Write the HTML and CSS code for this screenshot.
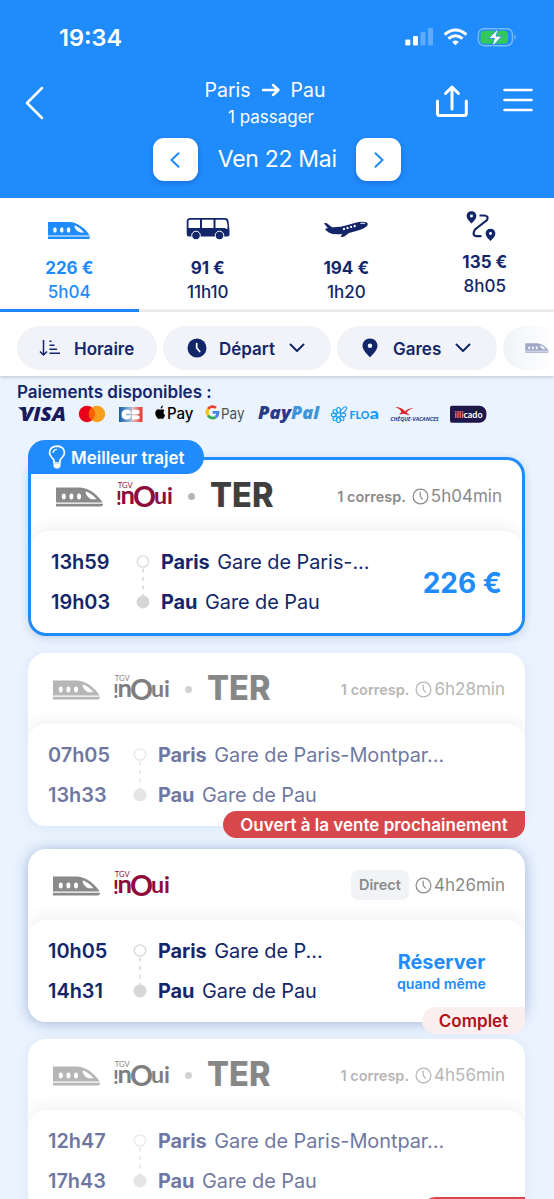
FILE: index.html
```
<!DOCTYPE html>
<html lang="fr">
<head>
<meta charset="utf-8">
<title>Paris - Pau</title>
<link rel="stylesheet" href="styles.css">
</head>
<body>
<svg class="defs" width="0" height="0">
  <symbol id="train" viewBox="0 0 47 20">
    <path fill="currentColor" fill-rule="evenodd" d="M0 .5h24C33 .5 43 9 46.6 15.500H0zM7.800 6.500q-2 0-2 3t2 3 2-3-2-3zm7.600 0q-2 0-2 3t2 3 2-3-2-3zm7.600 0q-2 0-2 3t2 3 2-3-2-3zM30.500 4.500q-1.800.8 0 3.500 2.500 4 5.500 4.300h4.500Q36.500 7 30.500 4.500z"/>
    <path fill="currentColor" d="M0 16.800h47q.3 2.700-2.500 2.700H0z"/>
  </symbol>
  <symbol id="clock" viewBox="0 0 17 17">
    <circle cx="8.500" cy="8.500" r="7.400" fill="none" stroke="currentColor" stroke-width="1.200"/>
    <path d="M8.200 4v4.600l2.300 2.600" fill="none" stroke="currentColor" stroke-width="1.200" stroke-linecap="round"/>
  </symbol>
  <symbol id="down" viewBox="0 0 16 10">
    <path d="M1.500 1.500L8 8l6.500-6.500" fill="none" stroke="currentColor" stroke-width="2" stroke-linecap="round" stroke-linejoin="round"/>
  </symbol>
  <symbol id="pin" viewBox="0 0 16 20">
    <path fill="currentColor" fill-rule="evenodd" d="M8 .5C3.700.5.5 3.700.5 7.800.5 12 4.500 16 8 19.200c3.500-3.200 7.500-7.200 7.500-11.400C15.500 3.700 12.300.5 8 .5zM8 5.500a2.300 2.300 0 1 1 0 4.600 2.300 2.300 0 0 1 0-4.600z"/>
  </symbol>
  <symbol id="inoui" viewBox="0 0 56 30">
    <g fill="currentColor" font-family="Lato, sans-serif">
      <text x=".8" y="7.300" font-size="8.200" textLength="15" lengthAdjust="spacingAndGlyphs">TGV</text>
      <g font-weight="700">
        <text x="-.8" y="23.700" font-size="18.500" font-weight="900">!</text>
        <text x="3.600" y="23" font-size="24" textLength="14.500" lengthAdjust="spacingAndGlyphs">n</text>
        <text x="37" y="23" font-size="23" textLength="19" lengthAdjust="spacingAndGlyphs">ui</text>
      </g>
      <text x="16" y="26.300" font-size="29" font-weight="700" textLength="23" lengthAdjust="spacingAndGlyphs">O</text>
    </g>
  </symbol>
  <symbol id="ter" viewBox="0 0 64 30">
    <text x="0" y="27.200" fill="currentColor" font-family="Inter, sans-serif" font-weight="800" font-size="34" textLength="63.500" lengthAdjust="spacingAndGlyphs">TER</text>
  </symbol>
  <symbol id="leg" viewBox="0 0 14 56">
    <circle cx="7" cy="7.500" r="5.700" fill="#fff" stroke="#dadada" stroke-width="1.300"/>
    <path d="M7 14.500V42" stroke="#d6d6d6" stroke-width="1.500" stroke-dasharray="4 4.500"/>
    <circle cx="7" cy="48" r="6.500" fill="#d6d6d6"/>
  </symbol>
</svg>

<header class="top">
  <div class="status">
    <span class="time">19:34</span>
    <svg width="112" height="20" viewBox="0 0 112 20">
      <g fill="#fff">
        <rect x=".3" y="11.500" width="5" height="6" rx="1.300"/><rect x="8" y="8" width="5" height="9.500" rx="1.300"/>
        <g opacity=".28"><rect x="15.500" y="4" width="5" height="13.500" rx="1.300"/><rect x="23" y="0" width="5" height="17.500" rx="1.300"/></g>
        <path d="M50.500 17.300l-3.400-3.300q3.400-2.900 6.800 0z"/>
      </g>
      <g fill="none" stroke="#fff" stroke-width="2.900"><path d="M39.600 6.600q10.900-9.400 21.800 0"/><path d="M43.400 10.700q7.100-6 14.200 0"/></g>
      <rect x="73.400" y=".7" width="34" height="17" rx="5.500" fill="none" stroke="#fff" stroke-opacity=".4" stroke-width="1.400"/>
      <rect x="75.500" y="2.800" width="27.500" height="13" rx="3.500" fill="#34c759"/>
      <path d="M109.500 6.500q2.600 2.600 0 5.200z" fill="#fff" opacity=".5"/>
      <path d="M93.500.2L83.800 10.500h5.700l-2.600 8.300L97 8.200h-6z" fill="#fff" stroke="#208bfb" stroke-width=".8"/>
    </svg>
  </div>
  <div class="nav">
    <svg class="back" width="20" height="34" viewBox="0 0 20 34"><path d="M17 2L2 17l15 15" fill="none" stroke="#fff" stroke-width="2.500" stroke-linecap="round" stroke-linejoin="round"/></svg>
    <div class="route">
      <div class="cities"><span>Paris</span><svg width="18" height="14" viewBox="0 0 18 14"><path d="M1 7h15M11 2l5.500 5-5.500 5" fill="none" stroke="#fff" stroke-width="2.500" stroke-linecap="round" stroke-linejoin="round"/></svg><span>Pau</span></div>
      <div class="pax">1 passager</div>
    </div>
    <svg class="share" width="34" height="34" viewBox="0 0 34 34"><path d="M2.500 16v12.500q0 2 2 2h24.800q2 0 2-2V16M17 24V2.500M10.500 8.500l6.500-6.500 6.500 6.500" fill="none" stroke="#fff" stroke-width="3" stroke-linecap="round" stroke-linejoin="round"/></svg>
    <svg class="menu" width="30" height="24" viewBox="0 0 30 24"><path d="M1.500 2h27M1.500 12h27M1.500 22h27" stroke="#fff" stroke-width="2.600" stroke-linecap="round"/></svg>
  </div>
  <div class="dates">
    <div class="step"><svg width="10" height="16" viewBox="0 0 10 16"><path d="M8.500 1.200L1.500 8l7 6.800" fill="none" stroke="#208bfb" stroke-width="2" stroke-linecap="round"/></svg></div>
    <span>Ven 22 Mai</span>
    <div class="step"><svg width="10" height="16" viewBox="0 0 10 16"><path d="M1.500 1.200L8.500 8l-7 6.800" fill="none" stroke="#208bfb" stroke-width="2" stroke-linecap="round"/></svg></div>
  </div>
</header>

<nav class="modes">
  <div class="mode active">
    <svg class="pic" width="42" height="32" viewBox="0 0 42 32"><use href="#train" x="0" y="8.500" width="42" height="18"/></svg>
    <b>226 €</b><span>5h04</span>
  </div>
  <div class="mode">
    <svg class="pic" width="44" height="32" viewBox="0 -1 44 32">
      <path fill="#14266a" d="M4 4h35q3 0 3.500 3L43.500 16v4q0 2.500-2.500 2.500H3Q.7 22.500.7 20V7.500Q.7 4 4 4z"/>
      <path fill="#fff" d="M3.500 5.800H14V14H2.500V7.500q0-1.200 1-1.700zM16 5.800h11.500V14H16zM29.500 5.800h9.800q1.200.4 1.600 2.500l.8 4-.5 3-2.500-1.300h-9.200z"/>
      <circle cx="10" cy="21.500" r="4.300" fill="#14266a" stroke="#fff" stroke-width="1"/><circle cx="33.500" cy="21.500" r="4.300" fill="#14266a" stroke="#fff" stroke-width="1"/>
    </svg>
    <b>91 €</b><span>11h10</span>
  </div>
  <div class="mode">
    <svg class="pic" width="46" height="32" viewBox="0 -1 46 32">
      <path fill="#14266a" d="M.8 9.200L3.500 9l5.500 4.300q8.500.2 14-1.700l8.500-2.600q6-1.700 10.500-1 3.300.6 2.700 2.800Q43.500 14 35 16.500l-9 2.600-5 3.700-3.500.2 1.700-3q-9 1.200-13.500-1.500L2 15.500l1.300-1.300 1.700.1z"/>
      <path stroke="#fff" stroke-width="2.100" stroke-dasharray="2 1.700" d="M20 15.200l14-3.700"/>
      <path stroke="#fff" stroke-width="1" d="M37.500 9.500q2.500-.7 4.300.1" fill="none"/>
    </svg>
    <b>194 €</b><span>1h20</span>
  </div>
  <div class="mode combo">
    <svg class="pic" width="32" height="32" viewBox="0 0 32 32" color="#14266a">
      <use href="#pin" x="-1" y="1" width="11" height="13"/><use href="#pin" x="18" y="18.500" width="11" height="13"/>
      <path d="M12.500 5.500h5q4.500.5 2.500 4.500L8 19.500q-3.500 6 1.500 6.700h5" fill="none" stroke="#14266a" stroke-width="2.200"/>
    </svg>
    <b>135 €</b><span>8h05</span>
  </div>
</nav>

<div class="filters">
  <div class="pill sort"><svg width="22" height="18" viewBox="0 0 22 18"><path d="M4.500 1v14.500M1 12.500l3.500 3.500L8 12.500M10.500 2.200h2M10.500 6.200h5M10.500 10.300h7.500M10.500 14.300h10.500" fill="none" stroke="#14266a" stroke-width="1.500"/></svg><span>Horaire</span></div>
  <div class="pill dep"><svg width="20" height="20" viewBox="0 0 20 20"><circle cx="10" cy="10" r="9.500" fill="#14266a"/><path d="M9.700 5.500V10l3 3.500" fill="none" stroke="#fff" stroke-width="1.700" stroke-linecap="round"/></svg><span>Départ</span><svg class="chev" width="16" height="10"><use href="#down"/></svg></div>
  <div class="pill sta"><svg width="16" height="20"><use href="#pin"/></svg><span>Gares</span><svg class="chev" width="16" height="10"><use href="#down"/></svg></div>
  <div class="pill last"><svg width="24" height="10"><use href="#train"/></svg></div>
</div>

<main>
  <div class="paytitle">Paiements disponibles :</div>
  <div class="pays">
    <svg width="50" height="22" viewBox="0 0 50 22"><path fill="#17195c" d="M0 4.200h6.500l3 8z"/><text x="2.500" y="18.300" font-family="Open Sans, sans-serif" font-style="italic" font-weight="800" font-size="19.500" fill="#17195c" textLength="45.500" lengthAdjust="spacingAndGlyphs">VISA</text></svg>
    <svg width="29" height="22" viewBox="0 0 29 22"><circle cx="8" cy="11" r="8.200" fill="#eb001b"/><circle cx="18" cy="11" r="8.200" fill="#f79e1b"/><path d="M13 4.500a8.200 8.200 0 0 1 0 13 8.200 8.200 0 0 1 0-13z" fill="#ff5f00"/></svg>
    <svg width="25" height="22" viewBox="0 0 25 22"><defs><linearGradient id="cb"><stop offset="0" stop-color="#155ca8"/><stop offset=".45" stop-color="#8fb6dd"/><stop offset=".6" stop-color="#e8b5b5"/><stop offset="1" stop-color="#e4322b"/></linearGradient></defs><rect y="4" width="23.500" height="15" fill="url(#cb)"/><path fill="#fff" d="M12 10.800V9.500Q11 6.500 7.500 6.500q-5 .3-5 5t5 5q3.500 0 4.500-3v-1.200H7.500v-1.500zM13 6.800h5.500q2.200.3 2.200 2.200T18.500 11.200H13zM13 12.200h5.500q2.200.3 2.200 2t-2.200 2.200H13z"/></svg>
    <svg width="40" height="22" viewBox="0 0 40 22"><path d="M7.800 3q.2 2-2 3-.5-2 2-3zM5.500 7q1.800-1 3.700.4-2 2.600.6 4.600-.8 3-2.600 3.500-1.700-.8-3.200 0Q2.200 15.300.8 11.500.2 7.500 3.200 6.500q1 0 2.300.5z" transform="translate(-.5 -.8) scale(1.080)"/><text x="12" y="15.500" font-family="Inter, sans-serif" font-size="15.500" font-weight="500" textLength="26.500" lengthAdjust="spacingAndGlyphs">Pay</text></svg>
    <svg width="41" height="22" viewBox="0 0 41 22"><g fill="none" stroke-width="2.500" transform="translate(-.5 -1.300) scale(1.100)"><path d="M9.600 5.500A5 5 0 0 0 2.400 6.500" stroke="#ea4335"/><path d="M2.400 6.500a5.300 5.300 0 0 0 0 6" stroke="#fbbc04"/><path d="M2.400 12.500A5 5 0 0 0 9.400 14" stroke="#34a853"/><path d="M9.400 14q2-1.500 2-4.300H6.500" stroke="#4285f4"/></g><text x="15" y="15.500" font-family="Inter, sans-serif" font-size="15" fill="#4d5156" textLength="23.500" lengthAdjust="spacingAndGlyphs">Pay</text></svg>
    <svg width="62" height="22" viewBox="0 0 62 22"><g font-family="Open Sans, sans-serif" font-style="italic" font-weight="800" font-size="17.500"><text x="0" y="16" fill="#2b3a86" textLength="33" lengthAdjust="spacingAndGlyphs">Pay</text><text x="33" y="16" fill="#3b94dc" textLength="28" lengthAdjust="spacingAndGlyphs">Pal</text></g></svg>
    <svg width="48" height="22" viewBox="0 0 48 22"><g fill="none" stroke="#1a9cf0" stroke-width="1.100"><ellipse cx="7.500" cy="7.300" rx="1.900" ry="2.800"/><ellipse cx="7.500" cy="16.700" rx="1.900" ry="2.800"/><ellipse cx="2.900" cy="12" rx="2.500" ry="1.900"/><ellipse cx="12.100" cy="12" rx="2.600" ry="1.900"/><g transform="rotate(45 7.500 12)"><ellipse cx="7.500" cy="16.500" rx="1.800" ry="2.600"/><ellipse cx="3" cy="12" rx="2.600" ry="1.800"/><ellipse cx="12" cy="12" rx="2.600" ry="1.800"/><ellipse cx="7.500" cy="5" rx="1.800" ry="4.200"/></g></g><g font-family="Lato, sans-serif" font-weight="900" fill="#1a9cf0"><text x="18.500" y="15.500" font-size="11" textLength="20" lengthAdjust="spacingAndGlyphs">FLO</text><text x="38.500" y="15.500" font-size="14.500" textLength="9.500" lengthAdjust="spacingAndGlyphs">a</text></g></svg>
    <svg width="49" height="22" viewBox="0 0 49 22"><path fill="#d9202a" d="M5 4q7 0 10 4.500Q18 5 24 5q-5 1-7.500 4.500l3.500 3-6-1.800-5 .8 2.500-2.500Q10 5.500 5 4z"/><text x=".3" y="18.200" font-family="Open Sans, sans-serif" font-style="italic" font-weight="700" font-size="5.800" fill="#28388c" textLength="48.400" lengthAdjust="spacingAndGlyphs">CHÈQUE-VACANCES</text></svg>
    <svg width="37" height="22" viewBox="0 0 37 22"><path fill="#20164a" d="M2 2.800h27.500q7 .8 7 8.500t-7 8.500H2q-2 0-2-2v-13q0-2 2-2z"/><g font-family="Lato, sans-serif" font-weight="700" font-size="9"><text x="4.500" y="14.500" fill="#f0808a" textLength="9" lengthAdjust="spacingAndGlyphs">illi</text><text x="13.500" y="14.500" fill="#fff" textLength="19" lengthAdjust="spacingAndGlyphs">cado</text></g></svg>
  </div>

  <section class="card best">
    <div class="tag"><svg width="18" height="24" viewBox="0 0 18 24"><path d="M6 18v-2.500Q5.500 14 3.500 12 1.500 9.700 1.500 7.500 2 1.500 9 1.200q7 .3 7.500 6.300 0 2.200-2 4.500-2 2-2.500 3.500V18z" fill="none" stroke="#fff" stroke-width="1.700"/><path d="M5 8q.3-3.300 3.800-3.700" fill="none" stroke="#fff" stroke-width="1.300"/><path d="M5.500 19h7v2.500l-2 2h-3l-2-2z" fill="#fff"/></svg><span>Meilleur trajet</span></div>
    <div class="head">
      <svg class="tr" width="47" height="20"><use href="#train"/></svg>
      <svg class="ino" width="56" height="30"><use href="#inoui"/></svg>
      <i class="dot"></i>
      <svg class="ter" width="64" height="30"><use href="#ter"/></svg>
      <div class="info"><b>1 corresp.</b><svg width="17" height="17"><use href="#clock"/></svg><span>5h04min</span></div>
    </div>
    <div class="panel">
      <div class="hours"><span>13h59</span><span>19h03</span></div>
      <svg class="leg" width="14" height="56"><use href="#leg"/></svg>
      <div class="stops"><div><b>Paris</b> Gare de Paris-...</div><div><b>Pau</b> Gare de Pau</div></div>
      <div class="price">226 €</div>
    </div>
  </section>

  <section class="card off">
    <div class="head">
      <svg class="tr" width="47" height="20"><use href="#train"/></svg>
      <svg class="ino" width="56" height="30"><use href="#inoui"/></svg>
      <i class="dot"></i>
      <svg class="ter" width="64" height="30"><use href="#ter"/></svg>
      <div class="info"><b>1 corresp.</b><svg width="17" height="17"><use href="#clock"/></svg><span>6h28min</span></div>
    </div>
    <div class="panel">
      <div class="hours"><span>07h05</span><span>13h33</span></div>
      <svg class="leg" width="14" height="56"><use href="#leg"/></svg>
      <div class="stops"><div><b>Paris</b> Gare de Paris-Montpar...</div><div><b>Pau</b> Gare de Pau</div></div>
    </div>
    <div class="flag soon">Ouvert à la vente prochainement</div>
  </section>

  <section class="card full">
    <div class="head">
      <svg class="tr" width="47" height="20"><use href="#train"/></svg>
      <svg class="ino" width="56" height="30"><use href="#inoui"/></svg>
      <div class="info"><b class="direct">Direct</b><svg width="17" height="17"><use href="#clock"/></svg><span>4h26min</span></div>
    </div>
    <div class="panel">
      <div class="hours"><span>10h05</span><span>14h31</span></div>
      <svg class="leg" width="14" height="56"><use href="#leg"/></svg>
      <div class="stops"><div><b>Paris</b> Gare de P...</div><div><b>Pau</b> Gare de Pau</div></div>
      <div class="book"><b>Réserver</b><span>quand même</span></div>
    </div>
    <div class="flag sold">Complet</div>
  </section>

  <section class="card off">
    <div class="head">
      <svg class="tr" width="47" height="20"><use href="#train"/></svg>
      <svg class="ino" width="56" height="30"><use href="#inoui"/></svg>
      <i class="dot"></i>
      <svg class="ter" width="64" height="30"><use href="#ter"/></svg>
      <div class="info"><b>1 corresp.</b><svg width="17" height="17"><use href="#clock"/></svg><span>4h56min</span></div>
    </div>
    <div class="panel">
      <div class="hours"><span>12h47</span><span>17h43</span></div>
      <svg class="leg" width="14" height="56"><use href="#leg"/></svg>
      <div class="stops"><div><b>Paris</b> Gare de Paris-Montpar...</div><div><b>Pau</b> Gare de Pau</div></div>
    </div>
    <div class="flag late"></div>
  </section>
</main>
</body>
</html>
```
FILE: styles.css
```
* { box-sizing: border-box; }
html, body { height: 1199px; overflow: hidden; }
body { margin: 0; width: 554px; background: #eaf3fe; color: #14266a; font-family: Inter, sans-serif; display: flex; flex-direction: column; }
svg { display: block; flex: none; overflow: visible; }
.defs { display: none; }

.top { height: 198px; flex: none; background: #208bfb; color: #fff; }
.status { height: 74px; padding: 0 37px 0 59px; display: flex; justify-content: space-between; align-items: center; }
.status .time { font-size: 23.5px; font-weight: 600; }
.status svg { margin-top: 2px; }
.nav { height: 64px; display: flex; align-items: flex-start; }
.back { margin: 11.5px 0 0 25px; }
.route { width: 160px; margin-left: 146px; display: flex; flex-direction: column; align-items: center; }
.cities { display: flex; align-items: center; gap: 11px; font-size: 19.5px; line-height: 24px; margin: 4px 12px 0 0; }
.pax { font-size: 17px; line-height: 20px; margin-top: 5px; }
.share { margin: 11px 0 0 84px; }
.menu { margin: 14px 0 0 34px; }
.dates { display: flex; align-items: center; justify-content: center; font-size: 23px; letter-spacing: -.3px; gap: 20px; height: 43px; }
.dates span { margin: -1px -.5px 0 0; }
.step { width: 45px; height: 43px; border-radius: 11px; background: #fff; display: flex; align-items: center; justify-content: center; box-shadow: 0 2px 5px rgba(0,40,120,.25); }

.modes { height: 114px; flex: none; background: #fff; display: flex; }
.mode { flex: 1; display: flex; flex-direction: column; align-items: center; padding-top: 15px; border-bottom: 3px solid #f1f2f6; font-size: 17px; line-height: 24px; font-weight: 500; }
.mode b { font-weight: 700; margin-top: 12px; }
.mode .pic { margin-bottom: -1px; }
.mode.combo { padding-top: 12px; }
.mode.combo .pic { margin-left: -4px; }
.mode.combo b { margin-top: 9px; }
.mode.active { color: #208bfb; border-color: #208bfb; }

.filters { position: relative; height: 64px; flex: none; background: #fff; box-shadow: 0 1px 4px rgba(0,0,0,.2); display: flex; gap: 6px; padding: 14px 0 0 17px; overflow: visible; }
.pill { height: 44px; flex: none; border-radius: 22px; background: #f1f3f8; display: flex; align-items: center; font-size: 17px; font-weight: 600; }
.pill span { margin-top: 1px; }
.sort { width: 140px; padding-left: 22px; gap: 13px; }
.dep { width: 168px; padding-left: 24px; gap: 12px; }
.sta { width: 160px; padding-left: 25px; gap: 15px; }
.last { width: 51px; padding-left: 22px; border-radius: 22px 0 0 22px; background: linear-gradient(90deg, #f1f3f8, #fff); color: #a0a8c8; }
.dep .chev { margin-left: 2px; }
.sta .chev { margin-left: -1px; }

main { padding: 6px 28px 0; display: flex; flex-direction: column; }
.paytitle { margin-left: -11px; font-size: 17px; font-weight: 600; line-height: 20px; }
.pays { margin: 1px 0 0 -10px; display: flex; gap: 11px; height: 22px; }

.card { position: relative; width: 497px; flex: none; border-radius: 18px; background: #fff; box-shadow: 0 2px 12px rgba(60,100,170,.08); margin-bottom: 17px; }
.best { margin: 32px 0 17px; border: 3px solid #208bfb; box-shadow: 0 2px 8px rgba(40,80,150,.2); }
.full { margin-top: 6px; box-shadow: 0 1px 14px rgba(60,90,160,.42); }
.tag { position: absolute; left: -3px; top: -20px; width: 176px; height: 34px; border-radius: 17px 17px 17px 0; background: #208bfb; color: #fff; display: flex; align-items: center; gap: 5px; padding-left: 20px; font-size: 17px; font-weight: 600; white-space: nowrap; }
.tag span { margin-top: 1px; }
.head { height: 71px; padding: 2px 20px 0 25px; display: flex; align-items: center; color: #8a8a8a; border-radius: 18px 18px 0 0; }
.ino { margin: -2px 0 0 14px; color: #8f0b3c; }
.dot { width: 7px; height: 7px; border-radius: 50%; background: #b5b5b5; margin-left: 15px; }
.ter { margin: -3px 0 0 15px; color: #3f3f3f; }
.info { margin-left: auto; display: flex; align-items: center; font-size: 17px; height: 24px; margin-top: -1px; }
.info b { font-size: 14.5px; font-weight: 600; margin-right: 6px; }
.info svg { margin-right: 2px; }
.info .direct { background: #f1f3f7; border-radius: 8px; height: 30px; line-height: 30px; width: 58px; text-align: center; }
.panel { height: 102px; padding: 0 20px 0 20px; display: flex; border-radius: 18px; background: #fff; box-shadow: 0 -5px 14px rgba(40,50,90,.06); clip-path: inset(-20px 0 0 0); font-size: 19.9px; line-height: 40px; }
.hours { width: 83px; padding-top: 11px; display: flex; flex-direction: column; font-weight: 600; }
.leg { margin-top: 23px; width: 14px; margin-left: 2px; }
.stops { padding: 11px 0 0 11px; white-space: nowrap; letter-spacing: -.05px; }
.stops b { font-weight: 700; margin-right: 2px; }
.price { margin-left: auto; padding-top: 32px; font-size: 28px; font-weight: 700; color: #208bfb; }
.book { margin: 31px 19px 0 auto; color: #208bfb; display: flex; flex-direction: column; align-items: center; line-height: 23px; }
.book b { font-weight: 700; }
.book span { font-size: 14.2px; font-weight: 600; line-height: 20px; }
.off .head > *, .off .panel > * { opacity: .62; }
.off .ino { color: #303030; }
.flag { position: absolute; right: 0; top: 158px; height: 27px; line-height: 28px; border-radius: 14px 0 14px 14px; font-size: 17px; font-weight: 600; text-align: center; z-index: 2; }
.soon { width: 302px; background: #d8474b; color: #fff; }
.sold { width: 103px; background: #fbeeef; color: #b01218; }
.late { width: 103px; background: #d8474b; }
```
